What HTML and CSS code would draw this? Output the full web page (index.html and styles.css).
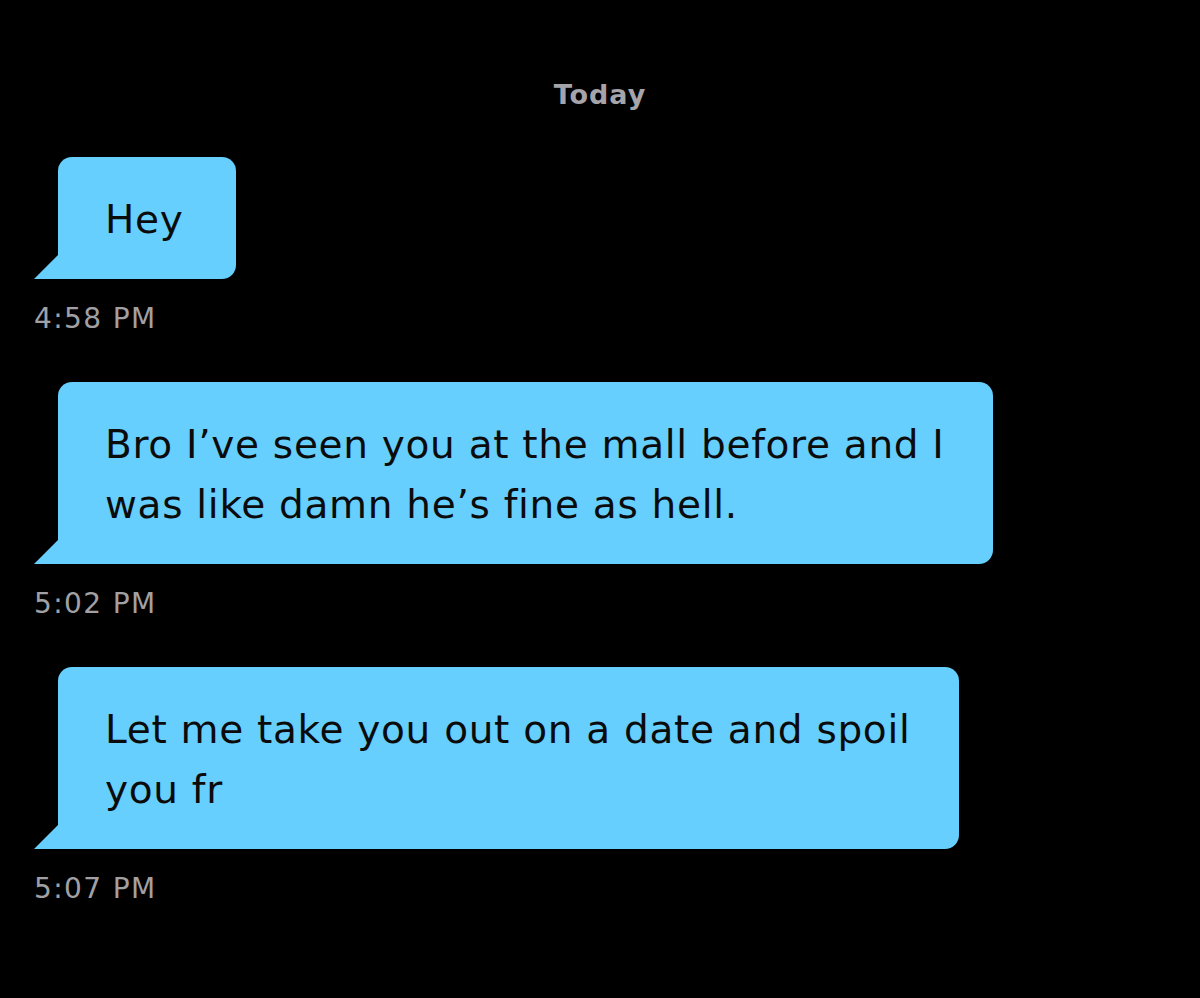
FILE: index.html
```html
<!DOCTYPE html>
<html lang="en">
<head>
<meta charset="utf-8">
<title>Chat</title>
<link rel="stylesheet" href="styles.css">
</head>
<body>
<main class="chat">
  <div class="day">Today</div>
  <div class="msg">
    <div class="bubble">Hey</div>
    <div class="time">4:58 PM</div>
  </div>
  <div class="msg">
    <div class="bubble">Bro I’ve seen you at the mall before and I<br>was like damn he’s fine as hell.</div>
    <div class="time">5:02 PM</div>
  </div>
  <div class="msg">
    <div class="bubble">Let me take you out on a date and spoil<br>you fr</div>
    <div class="time">5:07 PM</div>
  </div>
</main>
</body>
</html>
```
FILE: styles.css
```css
html, body {
  margin: 0;
  padding: 0;
  background: #000;
}
body {
  width: 1200px;
  height: 998px;
  overflow: hidden;
  font-family: "DejaVu Sans", Inter, sans-serif;
}
.chat {
  padding: 78px 0 0 34px;
  display: flex;
  flex-direction: column;
}
.day {
  align-self: stretch;
  margin-left: -34px;
  text-align: center;
  font-weight: 700;
  font-size: 27px;
  letter-spacing: 1px;
  line-height: 34px;
  color: #a4a4aa;
  margin-bottom: 45px;
}
.msg {
  display: flex;
  flex-direction: column;
  align-items: flex-start;
  margin-bottom: 46px;
}
.bubble {
  position: relative;
  margin-left: 24px;
  min-width: 83px;
  background: #66cffd;
  color: #0b0b0b;
  font-size: 39px;
  letter-spacing: 0.7px;
  line-height: 60px;
  padding: 33px 48px 29px 47px;
  border-radius: 14px 14px 14px 0;
}
.bubble::before {
  content: "";
  position: absolute;
  left: -24px;
  bottom: 0;
  width: 24px;
  height: 24px;
  background: #66cffd;
  clip-path: polygon(100% 0, 100% 100%, 0 100%);
}
.time {
  margin-top: 23px;
  font-size: 28px;
  letter-spacing: 1.4px;
  line-height: 34px;
  color: #a0a0a5;
}
```
